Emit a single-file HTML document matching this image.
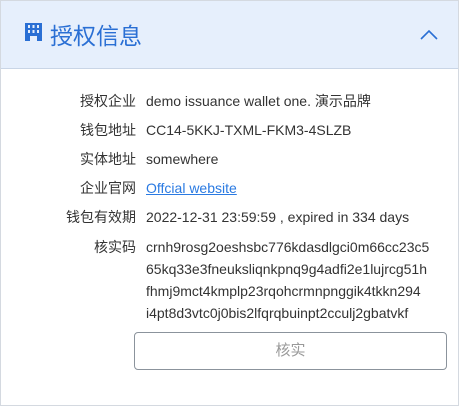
<html><head><style>
body{margin:0;width:459px;height:406px;background:#fff;font-family:"Liberation Sans","Noto Sans CJK SC",sans-serif;overflow:hidden}
.box{position:absolute;left:0;top:0;width:457px;height:404px;border:1px solid #d4d9e0;overflow:hidden}
.hd{position:absolute;left:0;top:0;width:457px;height:67px;background:#e6effc;border-bottom:1px solid #c9d5e6}
.title{position:absolute;left:49px;top:16px;font-size:23px;color:#2a6fd4;font-family:"Noto Sans CJK SC",sans-serif}
.row{position:absolute;left:0;width:457px;font-size:14px;color:#333;line-height:22px}
.lb{position:absolute;right:322px;white-space:nowrap;text-align:right}
.v{position:absolute;left:145px;white-space:nowrap}
a{color:#2a7ae2;text-decoration:underline}
.btn{position:absolute;left:133px;top:331px;width:311px;height:36px;border:1px solid #8b939c;border-radius:4px;text-align:center;line-height:36px;color:#999;font-size:15px}
</style></head><body><div class="box">
<div class="hd">
<svg style="position:absolute;left:24px;top:22px" width="17" height="18" viewBox="0 0 17 18"><rect x="0" y="0" width="17" height="18" fill="#2a6fd4"/><g fill="#e6effc"><rect x="3" y="2" width="2" height="3"/><rect x="7.5" y="2" width="2" height="3"/><rect x="12" y="2" width="2" height="3"/><rect x="3" y="7" width="2" height="3"/><rect x="7.5" y="7" width="2" height="3"/><rect x="12" y="7" width="2" height="3"/><rect x="5" y="13" width="7" height="5"/></g></svg>
<div class="title">授权信息</div>
<svg style="position:absolute;left:419px;top:28px" width="18" height="11" viewBox="0 0 18 11"><path d="M1 10L9 2L17 10" stroke="#2a6fd4" stroke-width="1.6" fill="none"/></svg>
</div>
<div class="row" style="top:89px"><span class="lb">授权企业</span><span class="v">demo issuance wallet one. 演示品牌</span></div>
<div class="row" style="top:118px"><span class="lb">钱包地址</span><span class="v">CC14-5KKJ-TXML-FKM3-4SLZB</span></div>
<div class="row" style="top:147px"><span class="lb">实体地址</span><span class="v">somewhere</span></div>
<div class="row" style="top:176px"><span class="lb">企业官网</span><span class="v"><a>Offcial website</a></span></div>
<div class="row" style="top:205px"><span class="lb">钱包有效期</span><span class="v">2022-12-31 23:59:59 , expired in 334 days</span></div>
<div class="row" style="top:235px"><span class="lb">核实码</span><span class="v">crnh9rosg2oeshsbc776kdasdlgci0m66cc23c5<br>65kq33e3fneuksliqnkpnq9g4adfi2e1lujrcg51h<br>fhmj9mct4kmplp23rqohcrmnpnggik4tkkn294<br>i4pt8d3vtc0j0bis2lfqrqbuinpt2cculj2gbatvkf</span></div>
<div class="btn">核实</div>
</div></body></html>
